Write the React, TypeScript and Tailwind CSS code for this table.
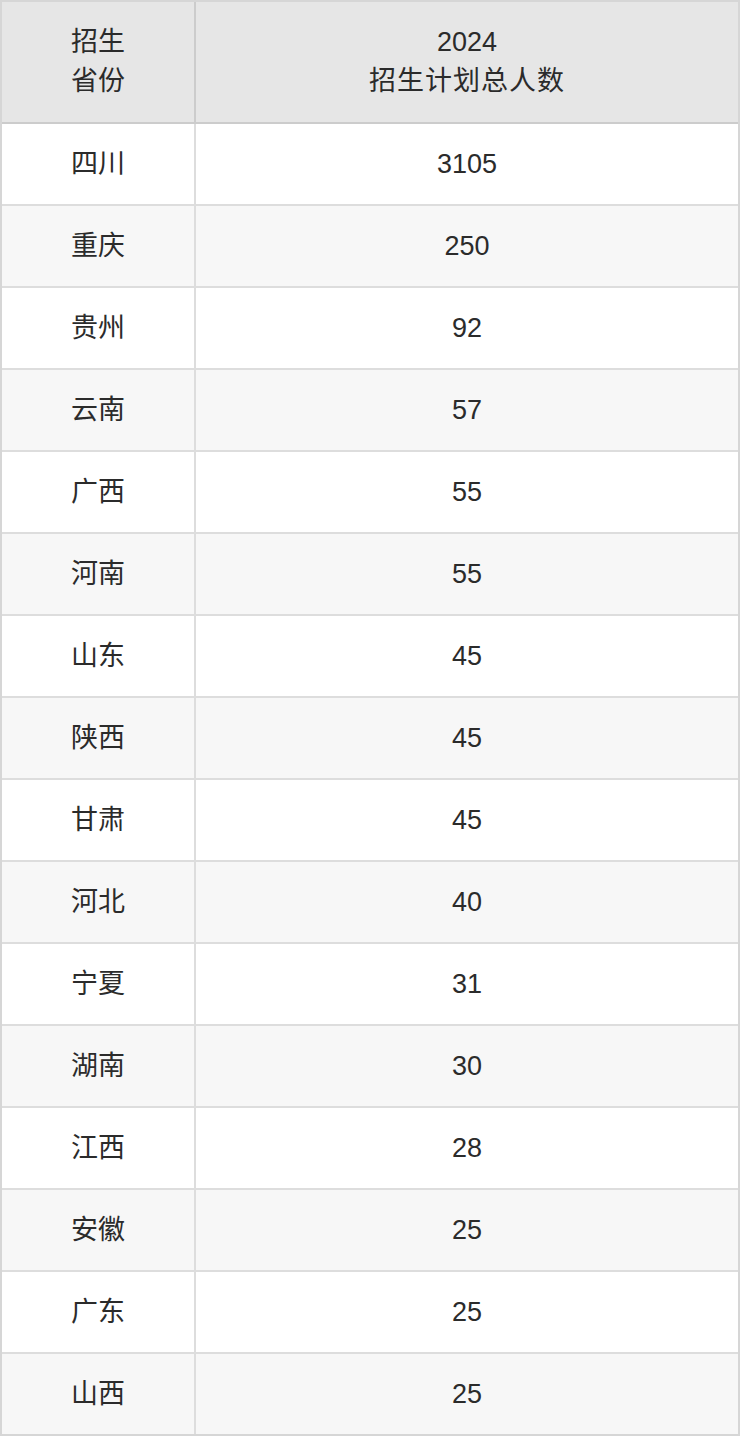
const ROWS: [string, number][] = [
  ['四川', 3105],
  ['重庆', 250],
  ['贵州', 92],
  ['云南', 57],
  ['广西', 55],
  ['河南', 55],
  ['山东', 45],
  ['陕西', 45],
  ['甘肃', 45],
  ['河北', 40],
  ['宁夏', 31],
  ['湖南', 30],
  ['江西', 28],
  ['安徽', 25],
  ['广东', 25],
  ['山西', 25],
];

const font = {
  fontFamily:
    '"Liberation Sans", "Noto Sans CJK SC", sans-serif',
};

export default function App() {
  return (
    <div
      className="w-[740px] bg-white text-[27px] leading-[39px] text-[#2b2b2b]"
      style={font}
    >
      <div className="border-2 border-[#d6d6d6]">
        {/* header */}
        <div className="flex h-[122px] border-b-2 border-[#cccccc] bg-[#e6e6e6]">
          <div className="flex w-[194px] shrink-0 flex-col items-center justify-center border-r-2 border-[#cccccc] text-center">
            <span>招生</span>
            <span>省份</span>
          </div>
          <div className="flex flex-1 flex-col items-center justify-center text-center">
            <span>2024</span>
            <span className="tracking-[1px]">招生计划总人数</span>
          </div>
        </div>

        {/* body */}
        {ROWS.map(([province, count], i) => (
          <div
            key={province + i}
            className={
              'flex ' +
              (i === ROWS.length - 1
                ? 'h-[80px] '
                : 'h-[82px] border-b-2 border-[#dddddd] ') +
              (i % 2 === 0 ? 'bg-white' : 'bg-[#f7f7f7]')
            }
          >
            <div className="flex w-[194px] shrink-0 items-center justify-center border-r-2 border-[#dddddd]">
              {province}
            </div>
            <div className="flex flex-1 items-center justify-center">
              {count}
            </div>
          </div>
        ))}
      </div>
    </div>
  );
}
